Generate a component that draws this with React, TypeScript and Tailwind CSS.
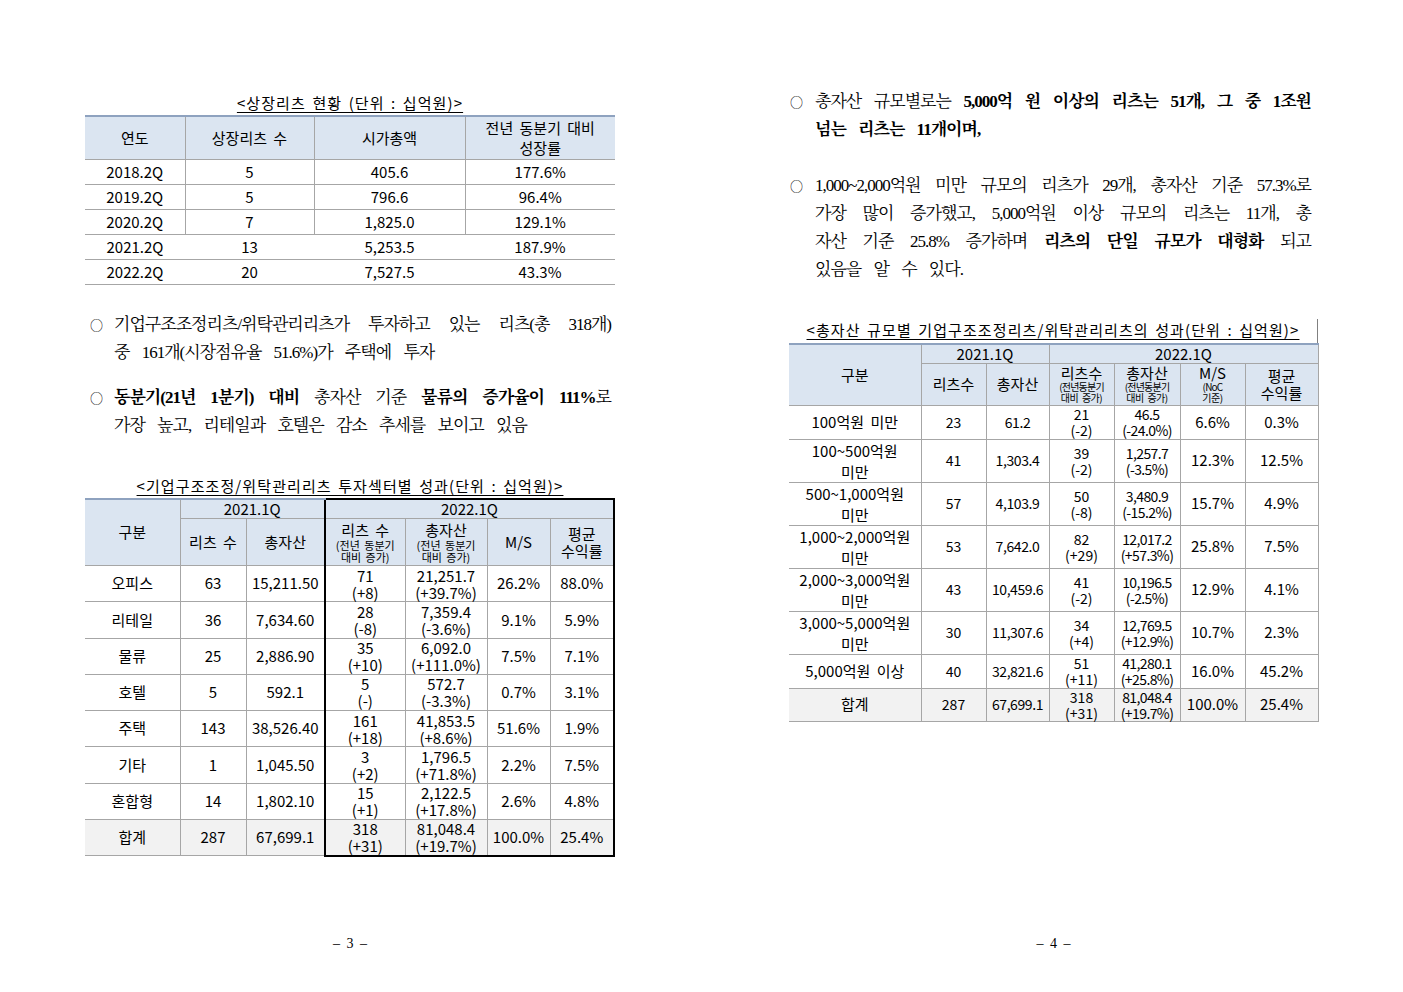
import React from "react";

const TF = "font-['Noto_Sans_CJK_KR',sans-serif]";
const BF = "font-['Liberation_Serif','Noto_Serif_CJK_KR','Noto_Sans_CJK_KR',serif]";

function cls(...a: (string | false | undefined)[]) {
  return a.filter(Boolean).join(" ");
}

type Seg = { t: string; b?: boolean };

function Line({ segs, last }: { segs: Seg[]; last?: boolean }) {
  return (
    <div
      className={
        last
          ? "h-[28px] leading-[28px] [word-spacing:9px]"
          : "h-[28px] leading-[28px] text-justify [text-align-last:justify] [word-spacing:4px]"
      }
    >
      {segs.map((s, i) =>
        s.b ? (
          <b key={i} className="font-bold">
            {s.t}
          </b>
        ) : (
          <span key={i}>{s.t}</span>
        )
      )}
    </div>
  );
}

function Bullet({ lines, side }: { lines: Seg[][]; side: "l" | "r" }) {
  return (
    <div className={cls("flex text-[17px] tracking-[-1px] text-black", BF)}>
      <div
        className={cls(
          "flex h-[28px] shrink-0 items-center text-[13px] tracking-normal font-['Noto_Sans_CJK_KR',sans-serif]",
          side === "l" ? "w-[29px] pl-[5px]" : "w-[26px] pl-[1px]"
        )}
      >
        ○
      </div>
      <div className={side === "l" ? "w-[497px]" : "w-[496px]"}>
        {lines.map((l, i) => (
          <Line key={i} segs={l} last={i === lines.length - 1} />
        ))}
      </div>
    </div>
  );
}

function Caption({ text, extra }: { text: string; extra?: string }) {
  return (
    <div
      className={cls(
        "text-center text-[15px] tracking-[1.1px] text-black [word-spacing:2px]",
        TF,
        extra
      )}
    >
      <span className="underline decoration-1 underline-offset-[3px]">{text}</span>
    </div>
  );
}

function Two({ a, b, lh }: { a: string; b: string; lh: string }) {
  return (
    <div className={lh}>
      {a}
      <br />
      {b}
    </div>
  );
}

const T1 = [
  ["2018.2Q", "5", "405.6", "177.6%"],
  ["2019.2Q", "5", "796.6", "96.4%"],
  ["2020.2Q", "7", "1,825.0", "129.1%"],
  ["2021.2Q", "13", "5,253.5", "187.9%"],
  ["2022.2Q", "20", "7,527.5", "43.3%"],
];

function Table1() {
  return (
    <table className={cls("w-[530px] table-fixed border-collapse text-[15px] text-black [word-spacing:3px]", TF)}>
      <colgroup>
        <col className="w-[100px]" />
        <col className="w-[129px]" />
        <col className="w-[151px]" />
        <col className="w-[150px]" />
      </colgroup>
      <thead>
        <tr className="bg-[#dbe5f1]">
          <th className="h-[43px] border-t-2 border-t-[#8ea2bf] border-b border-b-[#a6a6a6] p-0 font-normal">연도</th>
          <th className="border-t-2 border-t-[#8ea2bf] border-b border-b-[#a6a6a6] border-l border-l-[#a6a6a6] p-0 font-normal">상장리츠 수</th>
          <th className="border-t-2 border-t-[#8ea2bf] border-b border-b-[#a6a6a6] border-l border-l-[#a6a6a6] p-0 font-normal">시가총액</th>
          <th className="border-t-2 border-t-[#8ea2bf] border-b border-b-[#a6a6a6] border-l border-l-[#a6a6a6] p-0 font-normal">
            <Two a="전년 동분기 대비" b="성장률" lh="leading-[20px]" />
          </th>
        </tr>
      </thead>
      <tbody>
        {T1.map((r, i) => (
          <tr key={i}>
            {r.map((c, j) => (
              <td
                key={j}
                className={cls(
                  "h-[25px] p-0 text-center leading-[20px] border-b border-b-[#a6a6a6]",
                  j > 0 && i < 3 && "border-l border-l-[#a6a6a6]"
                )}
              >
                {c}
              </td>
            ))}
          </tr>
        ))}
      </tbody>
    </table>
  );
}

const T2 = [
  ["오피스", "63", "15,211.50", "71", "(+8)", "21,251.7", "(+39.7%)", "26.2%", "88.0%"],
  ["리테일", "36", "7,634.60", "28", "(-8)", "7,359.4", "(-3.6%)", "9.1%", "5.9%"],
  ["물류", "25", "2,886.90", "35", "(+10)", "6,092.0", "(+111.0%)", "7.5%", "7.1%"],
  ["호텔", "5", "592.1", "5", "(-)", "572.7", "(-3.3%)", "0.7%", "3.1%"],
  ["주택", "143", "38,526.40", "161", "(+18)", "41,853.5", "(+8.6%)", "51.6%", "1.9%"],
  ["기타", "1", "1,045.50", "3", "(+2)", "1,796.5", "(+71.8%)", "2.2%", "7.5%"],
  ["혼합형", "14", "1,802.10", "15", "(+1)", "2,122.5", "(+17.8%)", "2.6%", "4.8%"],
  ["합계", "287", "67,699.1", "318", "(+31)", "81,048.4", "(+19.7%)", "100.0%", "25.4%"],
];

function SubHead({ main }: { main: string }) {
  return (
    <div>
      <div className="text-[15px] leading-[17px]">{main}</div>
      <div className="mt-[1px] text-[11px] leading-[12px] [word-spacing:2px]">(전년 동분기</div>
      <div className="text-[11px] leading-[12px] [word-spacing:2px]">대비 증가)</div>
    </div>
  );
}

function Table2() {
  return (
    <table className={cls("w-[529px] table-fixed border-collapse text-[15px] text-black [word-spacing:3px]", TF)}>
      <colgroup>
        <col className="w-[95px]" />
        <col className="w-[66px]" />
        <col className="w-[79px]" />
        <col className="w-[80px]" />
        <col className="w-[82px]" />
        <col className="w-[63px]" />
        <col className="w-[64px]" />
      </colgroup>
      <thead>
        <tr className="bg-[#dbe5f1]">
          <th rowSpan={2} className="border-t-2 border-t-[#8ea2bf] border-b border-b-[#a6a6a6] p-0 font-normal">구분</th>
          <th colSpan={2} className="h-[20px] border-t-2 border-t-[#8ea2bf] border-b border-b-[#a6a6a6] border-l border-l-[#a6a6a6] p-0 font-normal leading-[18px]">2021.1Q</th>
          <th colSpan={4} className="border-t-2 border-t-black border-l-2 border-l-black border-r-2 border-r-black border-b border-b-[#a6a6a6] p-0 font-normal leading-[18px]">2022.1Q</th>
        </tr>
        <tr className="bg-[#dbe5f1]">
          <th className="h-[47px] border-b border-b-[#a6a6a6] border-l border-l-[#a6a6a6] p-0 font-normal">리츠 수</th>
          <th className="border-b border-b-[#a6a6a6] border-l border-l-[#a6a6a6] p-0 font-normal">총자산</th>
          <th className="border-b border-b-[#a6a6a6] border-l-2 border-l-black p-0 font-normal">
            <SubHead main="리츠 수" />
          </th>
          <th className="border-b border-b-[#a6a6a6] border-l border-l-[#a6a6a6] p-0 font-normal">
            <SubHead main="총자산" />
          </th>
          <th className="border-b border-b-[#a6a6a6] border-l border-l-[#a6a6a6] p-0 font-normal">M/S</th>
          <th className="border-b border-b-[#a6a6a6] border-l border-l-[#a6a6a6] border-r-2 border-r-black p-0 font-normal">
            <Two a="평균" b="수익률" lh="leading-[17px]" />
          </th>
        </tr>
      </thead>
      <tbody>
        {T2.map((r, i) => {
          const last = i === T2.length - 1;
          const bb = last ? "border-b-2 border-b-black" : "border-b border-b-[#a6a6a6]";
          return (
            <tr key={i} className={last ? "bg-[#f2f2f2]" : ""}>
              <td className="h-[36.25px] border-b border-b-[#a6a6a6] p-0 text-center">{r[0]}</td>
              <td className="border-b border-b-[#a6a6a6] border-l border-l-[#a6a6a6] p-0 text-center">{r[1]}</td>
              <td className="border-b border-b-[#a6a6a6] border-l border-l-[#a6a6a6] p-0 text-center">{r[2]}</td>
              <td className={cls("border-l-2 border-l-black p-0 text-center", bb)}>
                <Two a={r[3]} b={r[4]} lh="leading-[17px]" />
              </td>
              <td className={cls("border-l border-l-[#a6a6a6] p-0 text-center", bb)}>
                <Two a={r[5]} b={r[6]} lh="leading-[17px]" />
              </td>
              <td className={cls("border-l border-l-[#a6a6a6] p-0 text-center", bb)}>{r[7]}</td>
              <td className={cls("border-l border-l-[#a6a6a6] border-r-2 border-r-black p-0 text-center", bb)}>{r[8]}</td>
            </tr>
          );
        })}
      </tbody>
    </table>
  );
}

const T3: { k: string[]; h: string; v: string[] }[] = [
  { k: ["100억원 미만"], h: "h-[34px]", v: ["23", "61.2", "21", "(-2)", "46.5", "(-24.0%)", "6.6%", "0.3%"] },
  { k: ["100~500억원", "미만"], h: "h-[43px]", v: ["41", "1,303.4", "39", "(-2)", "1,257.7", "(-3.5%)", "12.3%", "12.5%"] },
  { k: ["500~1,000억원", "미만"], h: "h-[43px]", v: ["57", "4,103.9", "50", "(-8)", "3,480.9", "(-15.2%)", "15.7%", "4.9%"] },
  { k: ["1,000~2,000억원", "미만"], h: "h-[43px]", v: ["53", "7,642.0", "82", "(+29)", "12,017.2", "(+57.3%)", "25.8%", "7.5%"] },
  { k: ["2,000~3,000억원", "미만"], h: "h-[43px]", v: ["43", "10,459.6", "41", "(-2)", "10,196.5", "(-2.5%)", "12.9%", "4.1%"] },
  { k: ["3,000~5,000억원", "미만"], h: "h-[43px]", v: ["30", "11,307.6", "34", "(+4)", "12,769.5", "(+12.9%)", "10.7%", "2.3%"] },
  { k: ["5,000억원 이상"], h: "h-[34px]", v: ["40", "32,821.6", "51", "(+11)", "41,280.1", "(+25.8%)", "16.0%", "45.2%"] },
  { k: ["합계"], h: "h-[33px]", v: ["287", "67,699.1", "318", "(+31)", "81,048.4", "(+19.7%)", "100.0%", "25.4%"] },
];

function SubHead3({ main, a, b }: { main: string; a: string; b: string }) {
  return (
    <div>
      <div className="text-[15px] leading-[16px]">{main}</div>
      <div className="text-[10px] leading-[11px] tracking-[-0.8px] [word-spacing:0px]">{a}</div>
      <div className="text-[10px] leading-[11px] tracking-[-0.5px] [word-spacing:2px]">{b}</div>
    </div>
  );
}

function Table3() {
  return (
    <table className={cls("w-[529px] table-fixed border-collapse text-[15px] text-black [word-spacing:3px]", TF)}>
      <colgroup>
        <col className="w-[132px]" />
        <col className="w-[65px]" />
        <col className="w-[63px]" />
        <col className="w-[65px]" />
        <col className="w-[66px]" />
        <col className="w-[65px]" />
        <col className="w-[73px]" />
      </colgroup>
      <thead>
        <tr className="bg-[#dbe5f1]">
          <th rowSpan={2} className="border-t-2 border-t-[#8ea2bf] border-b border-b-[#a6a6a6] p-0 font-normal">구분</th>
          <th colSpan={2} className="h-[19px] border-t-2 border-t-[#8ea2bf] border-b border-b-[#a6a6a6] border-l border-l-[#a6a6a6] p-0 font-normal leading-[17px]">2021.1Q</th>
          <th colSpan={4} className="border-t-2 border-t-[#8ea2bf] border-b border-b-[#a6a6a6] border-l border-l-[#a6a6a6] border-r border-r-[#a6a6a6] p-0 font-normal leading-[17px]">2022.1Q</th>
        </tr>
        <tr className="bg-[#dbe5f1]">
          <th className="h-[42px] border-b border-b-[#a6a6a6] border-l border-l-[#a6a6a6] p-0 font-normal">리츠수</th>
          <th className="border-b border-b-[#a6a6a6] border-l border-l-[#a6a6a6] p-0 font-normal">총자산</th>
          <th className="border-b border-b-[#a6a6a6] border-l border-l-[#a6a6a6] p-0 font-normal">
            <SubHead3 main="리츠수" a="(전년동분기" b="대비 증가)" />
          </th>
          <th className="border-b border-b-[#a6a6a6] border-l border-l-[#a6a6a6] p-0 font-normal">
            <SubHead3 main="총자산" a="(전년동분기" b="대비 증가)" />
          </th>
          <th className="border-b border-b-[#a6a6a6] border-l border-l-[#a6a6a6] p-0 font-normal">
            <SubHead3 main="M/S" a="(NoC" b="기준)" />
          </th>
          <th className="border-b border-b-[#a6a6a6] border-l border-l-[#a6a6a6] border-r border-r-[#a6a6a6] p-0 font-normal">
            <Two a="평균" b="수익률" lh="leading-[17px]" />
          </th>
        </tr>
      </thead>
      <tbody>
        {T3.map((r, i) => {
          const last = i === T3.length - 1;
          return (
            <tr key={i} className={last ? "bg-[#f2f2f2]" : ""}>
              <td className={cls(r.h, "border-b border-b-[#a6a6a6] p-0 text-center")}>
                {r.k.length === 2 ? <Two a={r.k[0]} b={r.k[1]} lh="leading-[21px]" /> : r.k[0]}
              </td>
              <td className="border-b border-b-[#a6a6a6] border-l border-l-[#a6a6a6] p-0 text-center text-[14px]">{r.v[0]}</td>
              <td className="border-b border-b-[#a6a6a6] border-l border-l-[#a6a6a6] p-0 text-center text-[14px] tracking-[-0.4px]">{r.v[1]}</td>
              <td className="border-b border-b-[#a6a6a6] border-l border-l-[#a6a6a6] p-0 text-center text-[14px]">
                <Two a={r.v[2]} b={r.v[3]} lh="leading-[16px]" />
              </td>
              <td className="border-b border-b-[#a6a6a6] border-l border-l-[#a6a6a6] p-0 text-center text-[14px] tracking-[-0.6px]">
                <Two a={r.v[4]} b={r.v[5]} lh="leading-[16px]" />
              </td>
              <td className="border-b border-b-[#a6a6a6] border-l border-l-[#a6a6a6] p-0 text-center">{r.v[6]}</td>
              <td className="border-b border-b-[#a6a6a6] border-l border-l-[#a6a6a6] border-r border-r-[#a6a6a6] p-0 text-center">{r.v[7]}</td>
            </tr>
          );
        })}
      </tbody>
    </table>
  );
}

function PageNum({ n }: { n: string }) {
  return (
    <div className="mt-auto mb-[38px] h-[20px] text-center text-[14px] leading-[20px] text-black font-['Liberation_Serif',serif] [word-spacing:3px]">
      – {n} –
    </div>
  );
}

export default function App() {
  return (
    <div className="h-[992px] w-[1403px] overflow-hidden bg-white">
      <div className="flex h-[992px] gap-[174px] pl-[85px]">
        <div className="flex h-[992px] w-[530px] flex-col pt-[93px]">
          <Caption text="<상장리츠 현황 (단위 : 십억원)>" extra="h-[22px] leading-[20px]" />
          <Table1 />
          <div className="mt-[26px]">
            <Bullet
              side="l"
              lines={[
                [{ t: "기업구조조정리츠/위탁관리리츠가 투자하고 있는 리츠(총 318개)" }],
                [{ t: "중 161개(시장점유율 51.6%)가 주택에 투자" }],
              ]}
            />
          </div>
          <div className="mt-[17px]">
            <Bullet
              side="l"
              lines={[
                [
                  { t: "동분기(21년 1분기) 대비", b: true },
                  { t: " 총자산 기준 " },
                  { t: "물류의 증가율이 111%", b: true },
                  { t: "로" },
                ],
                [{ t: "가장 높고, 리테일과 호텔은 감소 추세를 보이고 있음" }],
              ]}
            />
          </div>
          <Caption
            text="<기업구조조정/위탁관리리츠 투자섹터별 성과(단위 : 십억원)>"
            extra="mt-[36px] h-[22px] leading-[20px]"
          />
          <Table2 />
          <PageNum n="3" />
        </div>
        <div className="flex h-[992px] w-[529px] flex-col pt-[88px]">
          <Bullet
            side="r"
            lines={[
              [
                { t: "총자산 규모별로는 " },
                { t: "5,000억 원 이상의 리츠는 51개, 그 중 1조원", b: true },
              ],
              [{ t: "넘는 리츠는 11개이며,", b: true }],
            ]}
          />
          <div className="mt-[28px]">
            <Bullet
              side="r"
              lines={[
                [{ t: "1,000~2,000억원 미만 규모의 리츠가 29개, 총자산 기준 57.3%로" }],
                [{ t: "가장 많이 증가했고, 5,000억원 이상 규모의 리츠는 11개, 총" }],
                [
                  { t: "자산 기준 25.8% 증가하며 " },
                  { t: "리츠의 단일 규모가 대형화", b: true },
                  { t: " 되고" },
                ],
                [{ t: "있음을 알 수 있다." }],
              ]}
            />
          </div>
          <Caption
            text="<총자산 규모별 기업구조조정리츠/위탁관리리츠의 성과(단위 : 십억원)>"
            extra="mt-[35px] h-[24px] leading-[22px] border-r border-r-[#808080]"
          />
          <Table3 />
          <PageNum n="4" />
        </div>
      </div>
    </div>
  );
}
